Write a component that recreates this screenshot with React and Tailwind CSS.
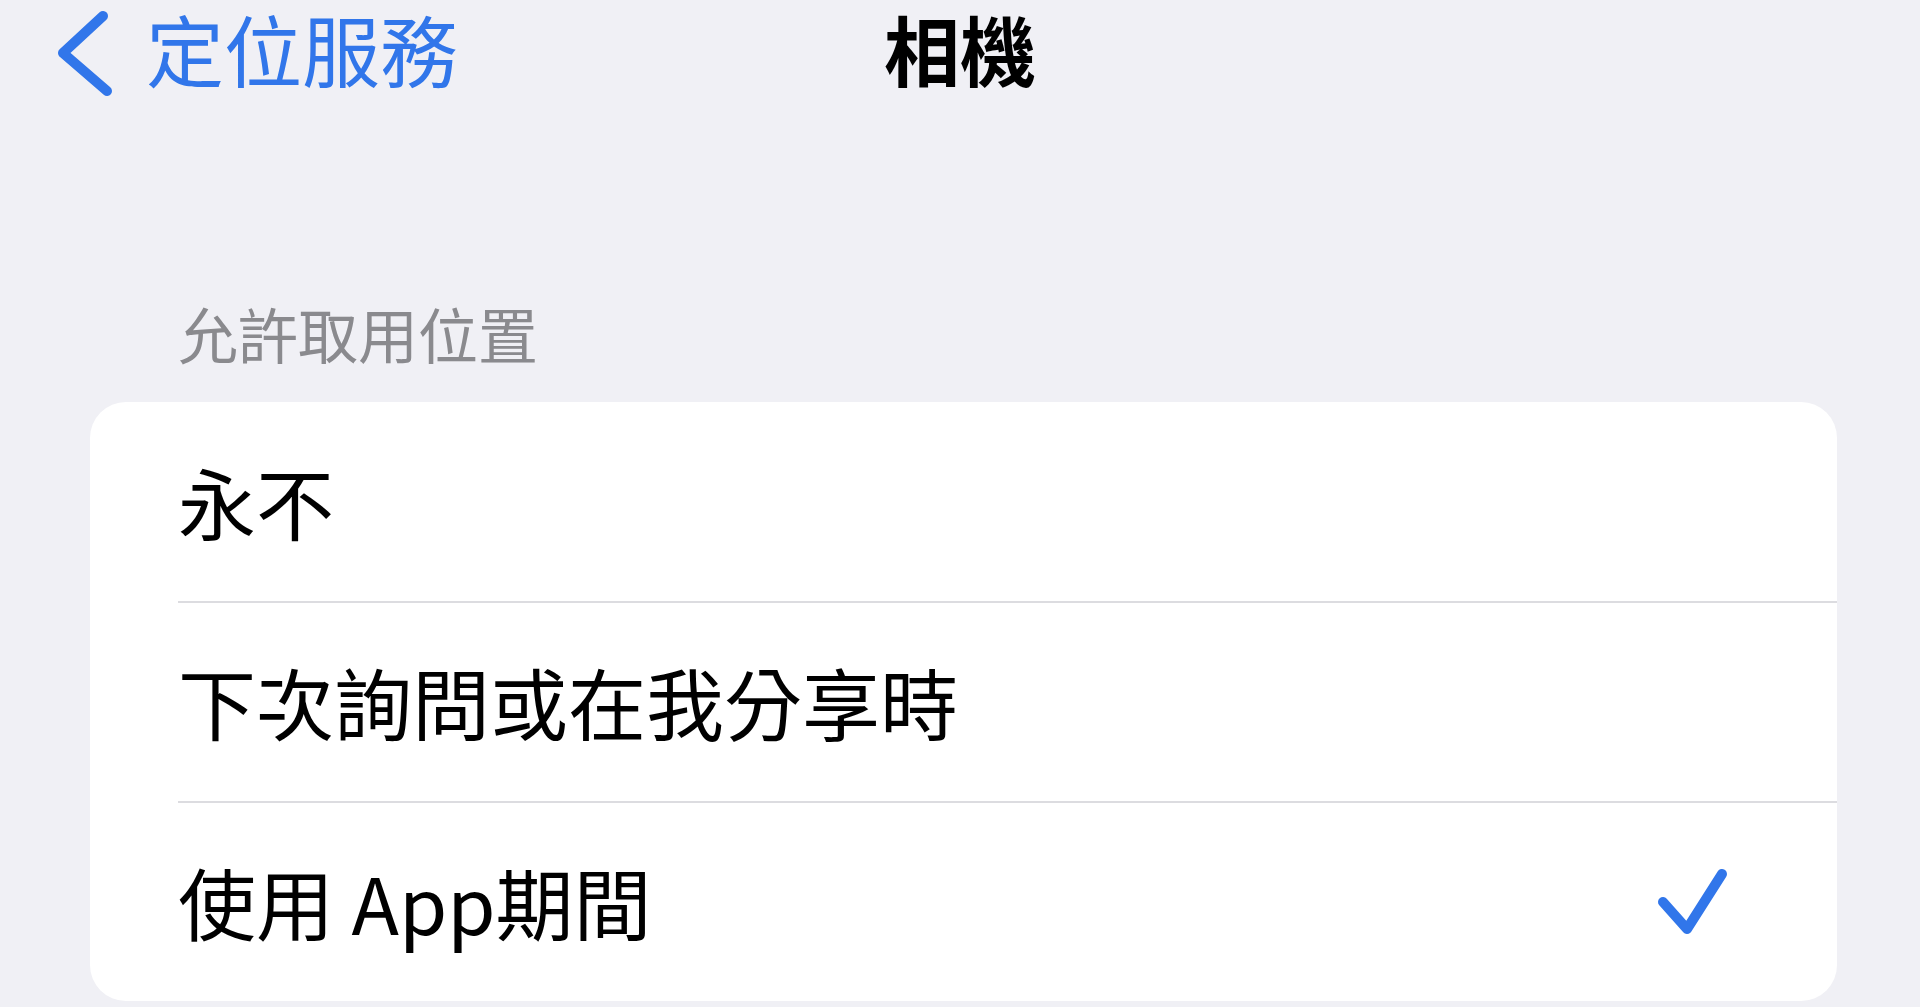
import React from 'react';

const options = [
  { id: 'never', label: '永不' },
  { id: 'ask', label: '下次詢問或在我分享時' },
  { id: 'using', label: '使用 App期間' },
];

const BackChevron = () => (
  <svg viewBox="0 0 60 90" className="w-[60px] h-[90px] shrink-0 mt-[8px]" fill="none">
    <path d="M48 8 L8 45 L52 83" stroke="currentColor" strokeWidth="10" strokeLinecap="round" strokeLinejoin="round" />
  </svg>
);

const CheckMark = () => (
  <svg viewBox="0 0 75 70" className="w-[75px] h-[70px] shrink-0" fill="none">
    <path d="M8 35 L32 62 L67 7" stroke="currentColor" strokeWidth="10" strokeLinecap="round" strokeLinejoin="round" />
  </svg>
);

const OptionRow = ({ label, selected, first }) => (
  <div className="pl-[88px]">
    <div
      className={`flex items-center justify-between pr-[107px] ${first ? 'h-[199px]' : 'h-[200px] border-t-2 border-[#dcdce0]'}`}
    >
      <span className="text-[78px] leading-tight text-black">{label}</span>
      {selected && (
        <span className="text-[#3176ea]">
          <CheckMark />
        </span>
      )}
    </div>
  </div>
);

const App = () => {
  const selected = 'using';

  return (
    <div className="min-h-screen bg-[#f0f0f5] font-['Noto_Sans_CJK_TC','Noto_Sans',sans-serif] overflow-hidden">
      {/* Navigation bar */}
      <header className="grid grid-cols-[1fr_auto_1fr] items-center h-[97px]">
        <button className="flex items-center gap-[31px] pl-[55px] text-[#3176ea]">
          <BackChevron />
          <span className="text-[78px] leading-[1.2]">定位服務</span>
        </button>
        <h1 className="text-[76px] leading-[1.2] font-bold text-black">相機</h1>
        <div />
      </header>

      {/* Section */}
      <section className="mt-[206px]">
        <div className="pl-[178px] mb-[39px] text-[60px] leading-none text-[#8a8a8e]">允許取用位置</div>
        <div className="ml-[90px] mr-[83px] bg-white rounded-[36px] overflow-hidden">
          {options.map((opt, i) => (
            <OptionRow key={opt.id} label={opt.label} selected={opt.id === selected} first={i === 0} />
          ))}
        </div>
      </section>
    </div>
  );
};

export default App;
